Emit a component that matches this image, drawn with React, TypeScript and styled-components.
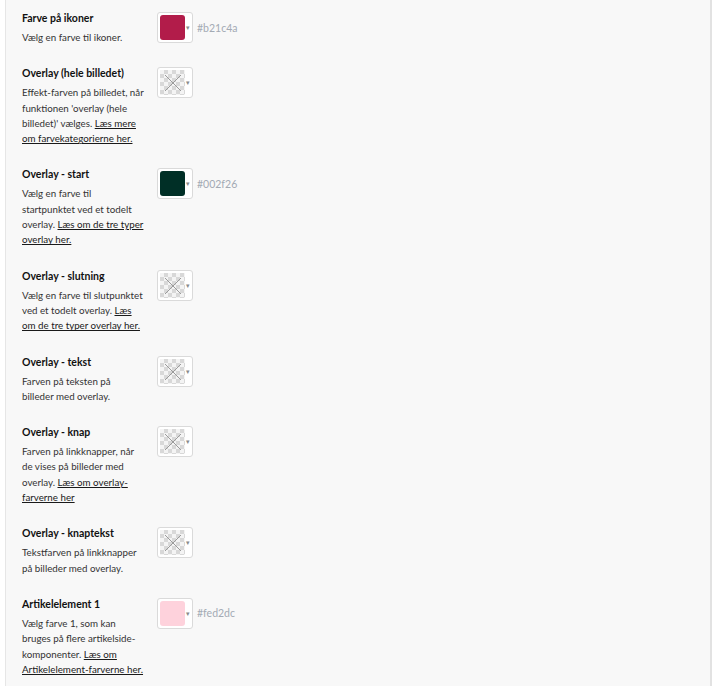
import React from "react";
import styled, { createGlobalStyle } from "styled-components";

const GlobalStyle = createGlobalStyle`
  html, body {
    margin: 0;
    padding: 0;
    background: #ffffff;
    font-family: Lato, "Open Sans", Arial, sans-serif;
  }
`;

interface ColorOption {
  title: string;
  text: string;
  link?: string;
  color?: string;
}

const options: ColorOption[] = [
  { title: "Farve på ikoner", text: "Vælg en farve til ikoner.", color: "#b21c4a" },
  {
    title: "Overlay (hele billedet)",
    text: "Effekt-farven på billedet, når funktionen 'overlay (hele billedet)' vælges. ",
    link: "Læs mere om farvekategorierne her.",
  },
  {
    title: "Overlay - start",
    text: "Vælg en farve til startpunktet ved et todelt overlay. ",
    link: "Læs om de tre typer overlay her.",
    color: "#002f26",
  },
  {
    title: "Overlay - slutning",
    text: "Vælg en farve til slutpunktet ved et todelt overlay. ",
    link: "Læs om de tre typer overlay her.",
  },
  { title: "Overlay - tekst", text: "Farven på teksten på billeder med overlay." },
  {
    title: "Overlay - knap",
    text: "Farven på linkknapper, når de vises på billeder med overlay. ",
    link: "Læs om overlay-farverne her",
  },
  { title: "Overlay - knaptekst", text: "Tekstfarven på linkknapper på billeder med overlay." },
  {
    title: "Artikelelement 1",
    text: "Vælg farve 1, som kan bruges på flere artikelside-komponenter. ",
    link: "Læs om Artikelelement-farverne her.",
    color: "#fed2dc",
  },
];

const App = () => {
  return (
    <>
      <GlobalStyle />
      <Panel>
        {options.map((item, idx) => (
          <Row key={idx}>
            <Info>
              <Title>{item.title}</Title>
              <Description>
                {item.text}
                {item.link && <Link>{item.link}</Link>}
              </Description>
            </Info>
            <PickerWrapper>
              <Swatch>
                {item.color ? (
                  <ColorBlock $color={item.color} />
                ) : (
                  <EmptyBlock>
                    <svg width="26" height="25" viewBox="0 0 26 25">
                      <line x1="5" y1="5" x2="21" y2="21" stroke="#9a9a9a" strokeWidth="1" />
                      <line x1="21" y1="5" x2="5" y2="21" stroke="#9a9a9a" strokeWidth="1" />
                    </svg>
                  </EmptyBlock>
                )}
                <Caret>▾</Caret>
              </Swatch>
              {item.color && <HexText>{item.color}</HexText>}
            </PickerWrapper>
          </Row>
        ))}
      </Panel>
    </>
  );
};

export default App;

const Panel = styled.div`
  margin-left: 5px;
  width: 707px;
  min-height: 686px;
  box-sizing: border-box;
  background-color: #f8f8f8;
  border-left: 1px solid #e6e6e6;
  border-right: 2px solid #e2e2e2;
  padding: 10px 0 0 16px;
`;

const Row = styled.div`
  display: flex;
  align-items: flex-start;
  padding-bottom: 20px;
`;

const Info = styled.div`
  width: 122px;
  margin-right: 13px;
`;

const Title = styled.div`
  font-size: 10.5px;
  line-height: 16px;
  font-weight: 700;
  color: #111111;
  margin-bottom: 4px;
`;

const Description = styled.div`
  font-size: 9.75px;
  line-height: 15.3px;
  color: #333333;
`;

const Link = styled.span`
  color: #1a1a1a;
  text-decoration: underline;
`;

const PickerWrapper = styled.div`
  display: flex;
  align-items: center;
  padding-top: 2px;
`;

const Swatch = styled.div`
  width: 36px;
  height: 31px;
  box-sizing: border-box;
  border: 1px solid #dadada;
  border-radius: 3px;
  background-color: #ffffff;
  padding: 2px;
  display: flex;
  align-items: center;
`;

const ColorBlock = styled.div<{ $color: string }>`
  width: 26px;
  height: 25px;
  border-radius: 3px;
  background-color: ${(p) => p.$color};
`;

const EmptyBlock = styled.div`
  width: 26px;
  height: 25px;
  overflow: hidden;
  background-color: #f4f4f4;
  background-image: linear-gradient(45deg, #d8d8d8 25%, transparent 25%, transparent 75%, #d8d8d8 75%),
    linear-gradient(45deg, #d8d8d8 25%, transparent 25%, transparent 75%, #d8d8d8 75%);
  background-size: 8px 8px;
  background-position: 0 0, 4px 4px;

  svg {
    display: block;
  }
`;

const Caret = styled.span`
  font-size: 7px;
  color: #8a8a8a;
  margin-left: 1px;
  line-height: 1;
`;

const HexText = styled.span`
  margin-left: 4px;
  font-size: 10.5px;
  color: #a3aab4;
`;
